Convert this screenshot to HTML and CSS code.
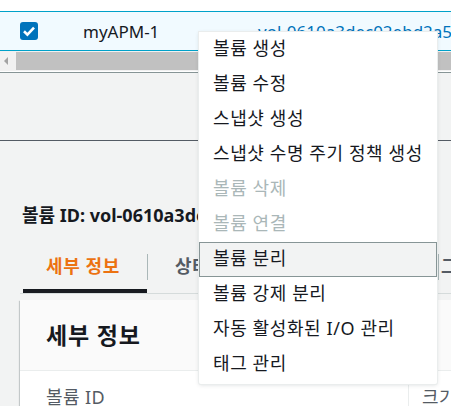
FILE: index.html
```html
<!DOCTYPE html>
<html lang="ko">
<head>
  <meta charset="UTF-8">
  <title>볼륨</title>
  <link rel="stylesheet" href="styles.css">
</head>
<body>
  <div class="table-wrap">
    <div class="row selected">
      <span class="checkbox">
        <svg width="18" height="18" viewBox="0 0 18 18"><path d="M4 9.3 L7.4 12.6 L14 5.6" fill="none" stroke="#fff" stroke-width="2.6"/></svg>
      </span>
      <span class="name">myAPM-1</span>
      <a class="link" href="#">vol-0610a3dec02ebd2a5</a>
    </div>
    <div class="scrollbar">
      <span class="arrow"></span>
      <span class="thumb"></span>
    </div>
  </div>

  <div class="split"></div>

  <div class="panel">
    <h2 class="title">볼륨 ID: vol-0610a3dec02ebd2a5 (myAPM-1)</h2>
    <div class="tabs">
      <div class="tab active">세부 정보</div>
      <div class="tab second">상태 검사</div>
      <div class="tab third">그룹</div>
    </div>
    <div class="card">
      <div class="card-header">세부 정보</div>
      <div class="card-body">
        <div class="cell">볼륨 ID</div>
        <div class="cell right">크기</div>
      </div>
    </div>
  </div>

  <!-- actions dropdown -->
  <ul class="menu">
    <li>볼륨 생성</li>
    <li>볼륨 수정</li>
    <li>스냅샷 생성</li>
    <li>스냅샷 수명 주기 정책 생성</li>
    <li class="disabled">볼륨 삭제</li>
    <li class="disabled">볼륨 연결</li>
    <li class="hover">볼륨 분리</li>
    <li>볼륨 강제 분리</li>
    <li>자동 활성화된 I/O 관리</li>
    <li>태그 관리</li>
  </ul>
</body>
</html>
```

FILE: styles.css
```css
body {
  margin: 0;
  height: 406px;
  font-family: "Noto Sans", "Noto Sans CJK KR", sans-serif;
  font-size: 16px;
  color: #16191f;
  background-color: #f2f3f3;
  overflow: hidden;
}

.table-wrap {
  background: #fff;
  padding-top: 11px;
  border-bottom: 1px solid #879596;
  padding-bottom: 1px;
}

.row {
  display: grid;
  grid-template-columns: 63px 175px 1fr;
  align-items: center;
  height: 38px;
  padding-left: 20px;
  white-space: nowrap;
  overflow: hidden;
}

.row.selected {
  background: #f1faff;
  border-top: 1px solid #00a1c9;
  border-bottom: 1px solid #00a1c9;
}

.checkbox {
  width: 18px;
  height: 18px;
  background: #0073bb;
  border-radius: 3px;
  display: block;
}

.checkbox svg {
  display: block;
}

.name {
  font-size: 17px;
}

.link {
  color: #0073bb;
  text-decoration: none;
  font-size: 17px;
}

.scrollbar {
  display: flex;
  align-items: center;
  height: 20px;
  background: #f1f1f1;
}

.arrow {
  width: 0;
  height: 0;
  margin: 0 8px 0 4px;
  border-top: 4px solid transparent;
  border-bottom: 4px solid transparent;
  border-right: 4px solid #a3a3a3;
}

.thumb {
  flex: 1;
  height: 18px;
  background: #c1c1c1;
}

.split {
  height: 67px;
  border-bottom: 1px solid #545b64;
}

.panel {
  padding: 63px 0 0 20px;
  overflow: hidden;
}

.title {
  margin: 0 0 14px 2px;
  font-size: 18px;
  font-weight: 700;
  line-height: 22px;
  white-space: nowrap;
}

.tabs {
  display: flex;
  height: 53px;
  border-bottom: 1px solid #d5dbdb;
  white-space: nowrap;
}

.tab {
  flex-shrink: 0;
  box-sizing: border-box;
  margin-top: 14px;
  height: 26px;
  line-height: 24px;
  font-size: 18px;
  letter-spacing: 0.6px;
  font-weight: 700;
  color: #545b64;
  border-left: 1px solid #aab7b8;
}

.tab.active {
  margin: 0 0 0 3px;
  width: 124px;
  height: 53px;
  line-height: 52px;
  padding-left: 23px;
  color: #ec7211;
  border-left: none;
  border-bottom: 4px solid #16191f;
}

.tab.second {
  width: 291px;
  padding-left: 27px;
}

.tab.third {
  padding-left: 2px;
}

.card {
  margin-top: 6px;
  background: #fff;
  box-shadow: 0 1px 1px rgba(0, 28, 36, 0.3), 1px 1px 1px rgba(0, 28, 36, 0.15), -1px 1px 1px rgba(0, 28, 36, 0.15);
}

.card-header {
  height: 70px;
  line-height: 70px;
  padding-left: 26px;
  background: #fafafa;
  border-bottom: 1px solid #eaeded;
  font-size: 23px;
  letter-spacing: 0.8px;
  font-weight: 700;
}

.card-body {
  display: grid;
  grid-template-columns: 388px 1fr;
  height: 36px;
}

.cell {
  padding: 12px 0 0 26px;
  color: #545b64;
  font-size: 18px;
  letter-spacing: 0.4px;
}

.cell.right {
  border-left: 1px solid #eaeded;
  padding-left: 13px;
  white-space: nowrap;
}

.menu {
  position: absolute;
  left: 199px;
  top: 32px;
  width: 238px;
  margin: 0;
  padding: 0 0 2px 0;
  list-style: none;
  background: #fff;
  box-shadow: 0 0 0 1px #eaeded, 0 1px 4px rgba(0, 28, 36, 0.15);
  border-radius: 0 0 2px 2px;
}

.menu li {
  box-sizing: border-box;
  height: 35px;
  line-height: 31px;
  padding-left: 13px;
  border: 1px solid transparent;
  font-size: 18px;
  letter-spacing: 0.6px;
  color: #16191f;
  white-space: nowrap;
}

.menu li.disabled {
  color: #aab7b8;
}

.menu li.hover {
  background: #f2f3f3;
  border-color: #879596;
}
```
